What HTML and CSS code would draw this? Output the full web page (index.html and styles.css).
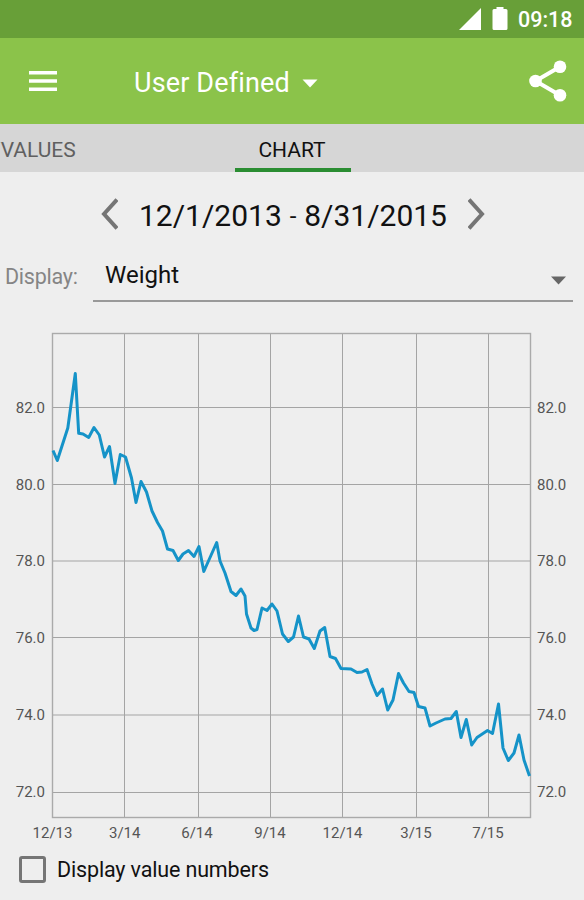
FILE: index.html
```html
<!DOCTYPE html>
<html lang="en">
<head>
<meta charset="utf-8">
<title>Weight chart</title>
<link rel="stylesheet" href="styles.css">
</head>
<body>
<div class="status">
  <svg class="signal" width="22" height="22" viewBox="0 0 22 22"><path d="M22 0V22H0Z" fill="#fff"/></svg>
  <svg class="battery" width="16" height="23" viewBox="0 0 16 23"><path d="M4.500 0h7v2H14q1.500 0 1.500 1.500v18Q15.500 23 14 23H2Q.5 23 .5 21.500v-18Q.5 2 2 2h2.500Z" fill="#fff"/></svg>
  <span class="clock">09:18</span>
</div>
<header class="appbar">
  <svg class="menu" width="30" height="22" viewBox="0 0 30 22"><path d="M1 2.700H29M1 11H29M1 19.300H29" stroke="#fff" stroke-width="3.600"/></svg>
  <div class="title"><span class="title-text">User Defined</span><svg width="16" height="9" viewBox="0 0 16 9"><path d="M.5 .5h15L8 8.500Z" fill="#fff"/></svg></div>
  <svg class="share" width="38" height="42" viewBox="0 0 38 42"><path d="M31 6.700 6.500 21 31 35.300" fill="none" stroke="#fff" stroke-width="4"/><g fill="#fff"><circle cx="31" cy="6.700" r="6.300"/><circle cx="6.500" cy="21" r="6.300"/><circle cx="31" cy="35.300" r="6.300"/></g></svg>
</header>
<nav class="tabs">
  <span class="tab tab-prev">/VALUES</span>
  <span class="tab tab-active"><span class="tab-label">CHART</span></span>
</nav>
<div class="range">
  <svg width="18" height="32" viewBox="0 0 18 32"><path d="M17 1.500 4 16 17 30.500" fill="none" stroke="#757575" stroke-width="4"/></svg>
  <span class="dates"><span class="date-from">12/1/2013</span><span class="dash">-</span><span class="date-to">8/31/2015</span></span>
  <svg width="18" height="32" viewBox="0 0 18 32"><path d="M1 1.500 14 16 1 30.500" fill="none" stroke="#757575" stroke-width="4"/></svg>
</div>
<div class="display">
  <span class="display-label">Display:</span>
  <div class="select"><span class="select-text">Weight</span><svg width="15" height="9" viewBox="0 0 15 9"><path d="M0 .5h15L7.500 8.500Z" fill="#666"/></svg></div>
</div>
<svg class="chart" width="584" height="526" viewBox="0 320 584 526">
  <path class="grid" d="M124.500 333V817M198.500 333V817M270.500 333V817M342.500 333V817M416.500 333V817M488.500 333V817M52.500 407.500H530M52.500 484.500H530M52.500 561H530M52.500 637.500H530M52.500 715H530M52.500 792.500H530"/>
  <rect class="frame" x="52.500" y="333.500" width="478" height="484"/>
  <polyline class="line" points="53,450.500 57.300,460.500 67.800,428 75.300,373.500 78.700,433.300 83,434 88.700,437.500 94,427.500 99.300,435 104.500,457 109.500,446.500 115,483.500 120.300,454.500 125.500,457 131.500,478 136,502.500 141,481.500 146.500,492 152,511 157.500,522.500 162.500,531 167.500,549 173,550.500 178.300,560.500 183,554 188.500,550.500 194,556.500 199,546.500 203.800,571.500 216.700,542.500 220,561 225,573 231,591.500 236,595.500 241,589 245,596 246.500,614 251,628 254,630.500 257,629.500 262,608 267,610.500 272,604 277,611 282.500,634 288.300,641.500 293.500,637 298.500,616 303.500,637 309,639 314.300,648.500 320,631 324.700,627.500 330,656.500 335.500,658.500 341,668.500 351,669 357,672.500 362,672 367,669.500 372,684 377,695.500 382.500,689 387.700,710 393,700 398.500,673.500 403.500,683 409,691.500 414,692.500 418.500,706.500 425,708 430,726 436,723 445,719 451,718.500 456.300,711.500 461,737.500 466.300,719.500 471.700,745 477,737.500 487.500,730.500 492.500,733.500 498.500,704 503,748 508.300,760.500 514,753 519,735 524,760 529.500,776"/>
  <g class="axis axis-left">
    <text x="45" y="412.500">82.0</text><text x="45" y="489.500">80.0</text><text x="45" y="566">78.0</text><text x="45" y="643">76.0</text><text x="45" y="720">74.0</text><text x="45" y="796.500">72.0</text>
  </g>
  <g class="axis">
    <text x="537" y="412.500">82.0</text><text x="537" y="489.500">80.0</text><text x="537" y="566">78.0</text><text x="537" y="643">76.0</text><text x="537" y="720">74.0</text><text x="537" y="796.500">72.0</text>
  </g>
  <g class="axis axis-bottom">
    <text x="52.500" y="837.500">12/13</text><text x="124.700" y="837.500">3/14</text><text x="197" y="837.500">6/14</text><text x="270" y="837.500">9/14</text><text x="342.500" y="837.500">12/14</text><text x="416" y="837.500">3/15</text><text x="488" y="837.500">7/15</text>
  </g>
</svg>
<label class="option"><span class="checkbox"></span><span class="option-text">Display value numbers</span></label>
</body>
</html>
```
FILE: styles.css
```css
* { box-sizing: border-box; }
body { margin: 0; width: 584px; height: 900px; overflow: hidden; background: #eee; font-family: Roboto, "Liberation Sans", sans-serif; color: #111; }
svg { display: block; flex: none; }
span { white-space: nowrap; }
.status { height: 38px; background: #689f38; display: flex; align-items: flex-start; padding: 7px 12px 0 459px; color: #fff; }
.signal { margin-top: 1px; }
.battery { margin-left: 11px; }
.clock { margin-left: 10px; font-size: 21.500px; font-weight: 500; line-height: 25px; }
.appbar { height: 86px; background: #8bc34a; display: flex; align-items: center; padding: 0 17px 0 28px; color: #fff; }
.menu { margin-top: -1px; }
.title { display: flex; align-items: center; margin-left: 76px; font-size: 27px; letter-spacing: .15px; padding-top: 3px; }
.title svg { margin: 2px 0 0 12px; }
.share { margin-left: auto; }
.tabs { height: 48px; background: #d6d6d6; display: flex; font-size: 21px; }
.tab { height: 48px; line-height: 52px; }
.tab-prev { width: 235px; margin-left: -8px; color: #606060; }
.tab-active { width: 116px; margin-left: 8px; padding-right: 2px; text-align: center; border-bottom: 4px solid #2a8d32; }
.range { height: 84px; display: flex; align-items: center; padding: 0 0 0 100px; gap: 21px; }
.dates { display: flex; width: 308px; justify-content: space-between; font-size: 30px; line-height: 36px; padding-top: 4px; }
.dash { font-size: 24px; }
.display { height: 64px; display: flex; padding-left: 5px; }
.display-label { width: 88px; font-size: 21.500px; letter-spacing: -.25px; line-height: 42px; color: #858585; }
.select { width: 480px; height: 46px; border-bottom: 2px solid #999; display: flex; justify-content: space-between; padding: 0 7px 0 12px; font-size: 24px; line-height: 39px; }
.select svg { margin-top: 20px; }
.grid { stroke: #8c8c8c; stroke-width: 1; opacity: .75; }
.frame { fill: none; stroke: #aaa; stroke-width: 1.4; }
.line { fill: none; stroke: #1593c8; stroke-width: 3; stroke-linejoin: round; }
.axis { fill: #555; font-size: 15px; }
.axis-left { text-anchor: end; }
.axis-bottom { text-anchor: middle; }
.option { display: flex; align-items: center; height: 46px; padding-left: 19px; gap: 11px; font-size: 21.500px; letter-spacing: -.15px; }
.checkbox { width: 27px; height: 27px; border: 3px solid #757575; border-radius: 3px; }
```
